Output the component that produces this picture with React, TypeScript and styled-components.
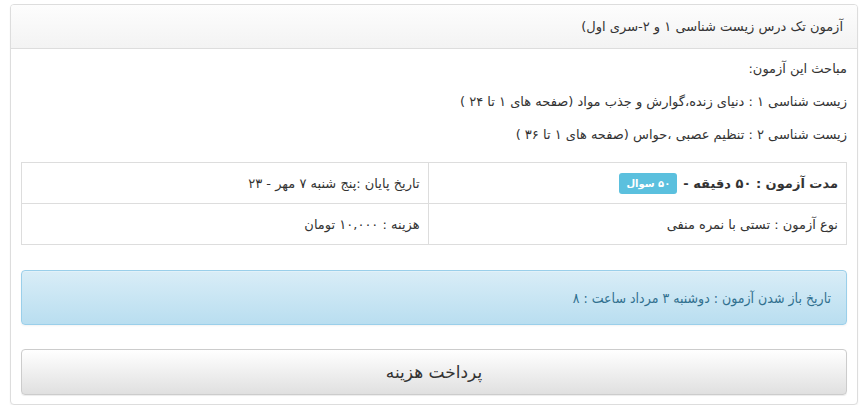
import React from 'react';
import styled, { createGlobalStyle } from 'styled-components';

const GlobalStyle = createGlobalStyle`
  body {
    margin: 0;
    background: #fff;
    font-family: "DejaVu Sans", sans-serif;
    color: #333;
  }
`;

const Page = styled.div`
  padding: 4px 9px 0 10px;
  direction: rtl;
`;

const Panel = styled.div`
  border: 1px solid #ddd;
  border-radius: 4px;
  box-shadow: 0 1px 2px rgba(0, 0, 0, 0.05);
  background: #fff;
`;

const PanelHeading = styled.div`
  height: 43px;
  display: flex;
  align-items: center;
  padding: 0 14px;
  font-size: 13px;
  color: #333;
  border-bottom: 1px solid #ddd;
  border-radius: 3px 3px 0 0;
  background: linear-gradient(to bottom, #fdfdfd 0%, #f3f3f3 100%);
`;

const PanelBody = styled.div`
  padding: 9px 10px 9px 10px;
`;

const Line = styled.p`
  margin: 0 0 11px 0;
  font-size: 13px;
  line-height: 22px;
`;

const InfoTable = styled.div`
  display: grid;
  grid-template-columns: 420fr 407fr;
  border: 1px solid #ddd;
  margin-top: 16px;
`;

const Cell = styled.div<{ $bold?: boolean; $last?: boolean; $bottom?: boolean }>`
  height: 40px;
  display: flex;
  align-items: center;
  gap: 6px;
  padding: 0 8px;
  font-size: 13px;
  font-weight: ${(p) => (p.$bold ? 'bold' : 'normal')};
  border-left: ${(p) => (p.$last ? 'none' : '1px solid #ddd')};
  border-bottom: ${(p) => (p.$bottom ? 'none' : '1px solid #ddd')};
`;

const Badge = styled.span`
  display: inline-block;
  background: #5bc0de;
  color: #fff;
  font-size: 10px;
  font-weight: bold;
  padding: 4px 7px 4px;
  border-radius: 3px;
  line-height: 13px;
`;

const Alert = styled.div`
  margin-top: 25px;
  height: 53px;
  display: flex;
  align-items: center;
  padding: 0 15px;
  font-family: "DejaVu Sans Condensed", "DejaVu Sans", sans-serif;
  font-size: 14px;
  color: #31708f;
  border: 1px solid #9acfea;
  border-radius: 4px;
  background: linear-gradient(to bottom, #d9edf7 0%, #b9def0 100%);
  box-shadow: inset 0 1px 0 rgba(255, 255, 255, 0.25), 0 1px 2px rgba(0, 0, 0, 0.05);
`;

const PayButton = styled.button`
  display: block;
  width: 100%;
  margin-top: 24px;
  height: 46px;
  font-family: "DejaVu Sans", sans-serif;
  font-size: 17px;
  color: #333;
  border: 1px solid #ccc;
  border-radius: 4px;
  background: linear-gradient(to bottom, #ffffff 0%, #e0e0e0 100%);
  box-shadow: inset 0 1px 0 rgba(255, 255, 255, 0.15), 0 1px 1px rgba(0, 0, 0, 0.075);
  cursor: pointer;
`;

export default function App() {
  return (
    <>
      <GlobalStyle />
      <Page>
        <Panel>
          <PanelHeading>آزمون تک درس زیست شناسی ۱ و ۲-سری اول)</PanelHeading>
          <PanelBody>
            <Line>مباحث این آزمون:</Line>
            <Line>زیست شناسی ۱ : دنیای زنده،گوارش و جذب مواد (صفحه های ۱ تا ۲۴ )</Line>
            <Line>زیست شناسی ۲ : تنظیم عصبی ،حواس (صفحه های ۱ تا ۳۶ )</Line>
            <InfoTable>
              <Cell $bold>
                مدت آزمون : ۵۰ دقیقه -
                <Badge>۵۰ سوال</Badge>
              </Cell>
              <Cell $last>تاریخ پایان :پنج شنبه ۷ مهر - ۲۳</Cell>
              <Cell $bottom>نوع آزمون : تستی با نمره منفی</Cell>
              <Cell $last $bottom>هزینه : ۱۰,۰۰۰ تومان</Cell>
            </InfoTable>
            <Alert>تاریخ باز شدن آزمون : دوشنبه ۳ مرداد ساعت : ۸</Alert>
            <PayButton>پرداخت هزینه</PayButton>
          </PanelBody>
        </Panel>
      </Page>
    </>
  );
}
